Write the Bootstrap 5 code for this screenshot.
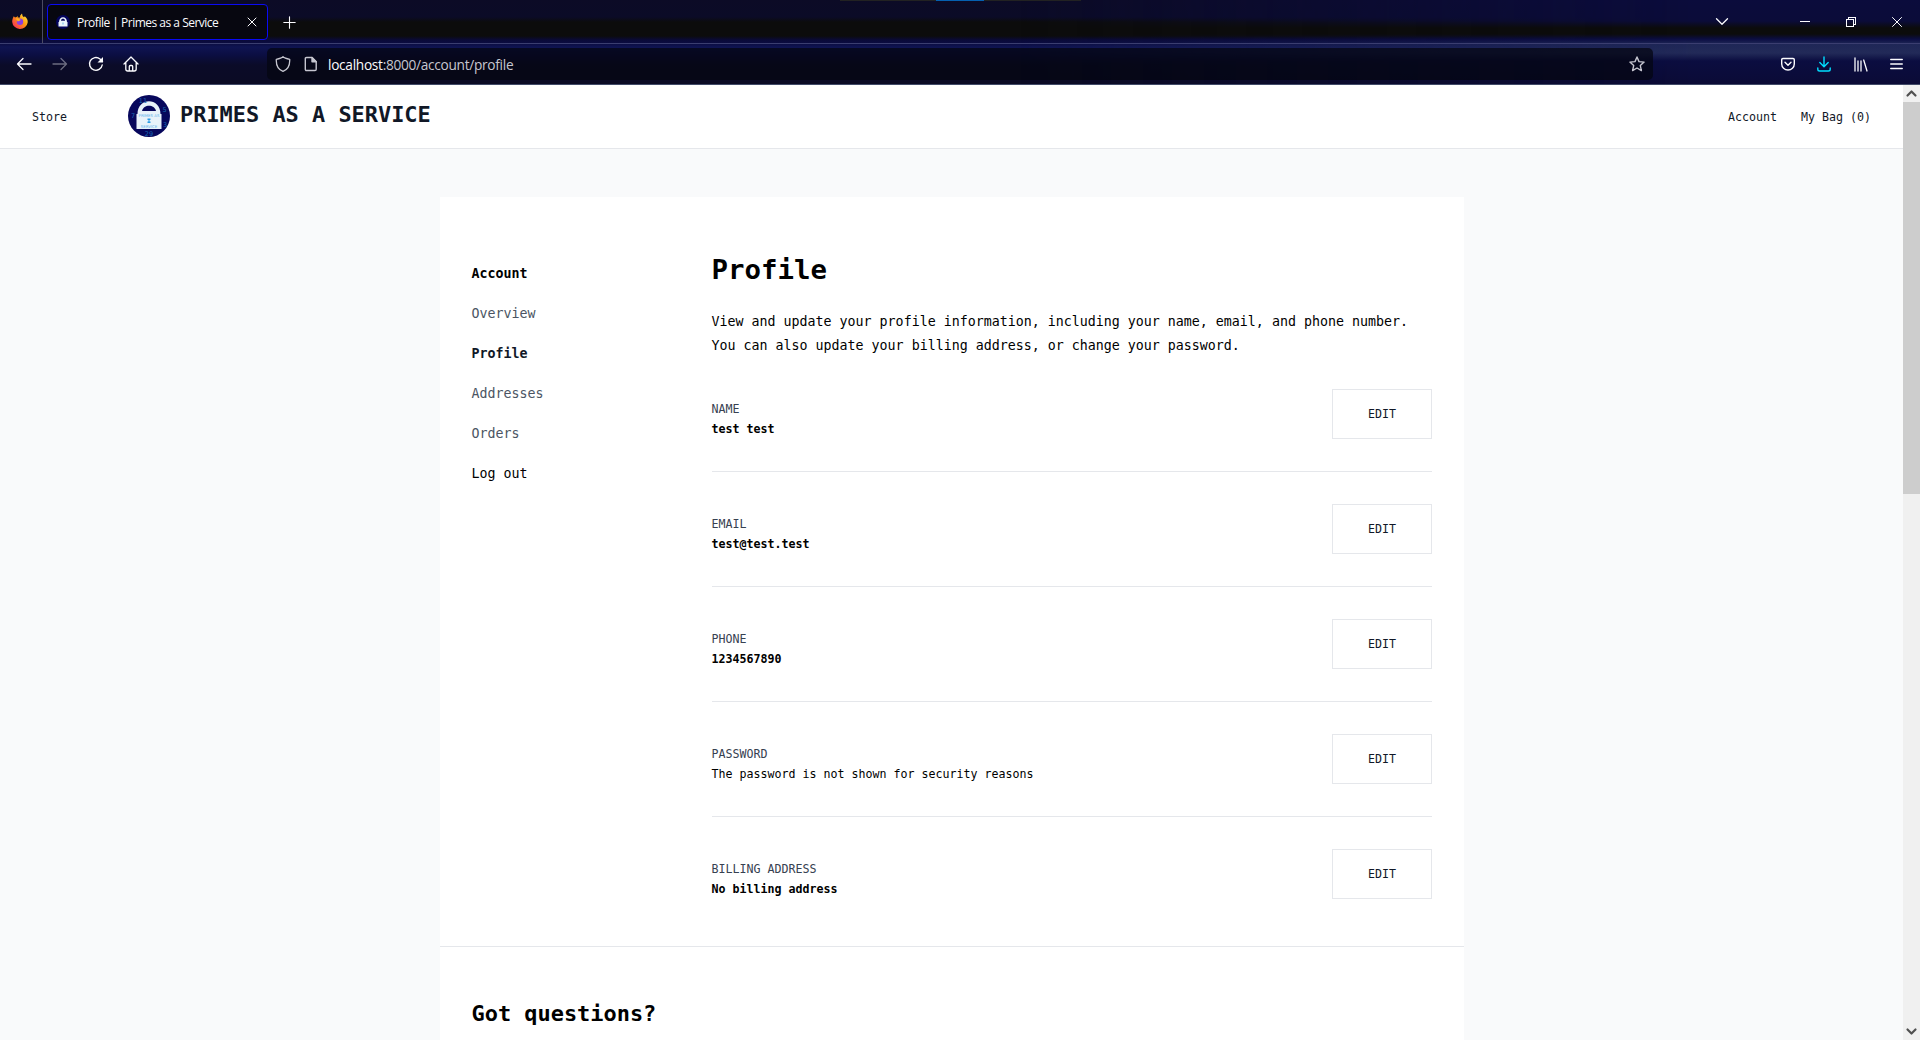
<!DOCTYPE html>
<html lang="en">
<head>
<meta charset="utf-8">
<title>Profile | Primes as a Service</title>
<link href="https://cdn.jsdelivr.net/npm/bootstrap@5.3.0/dist/css/bootstrap.min.css" rel="stylesheet">
<style>
html, body { height: 1040px; overflow: hidden; }
body { font-family: "DejaVu Sans Mono", monospace; font-size: 13.3px; line-height: 24px; color: #000; background: #f9fafb; }
a { color: inherit; text-decoration: none; }
svg { display: block; flex: none; fill: none; stroke: currentColor; stroke-linecap: round; stroke-linejoin: round; }
svg.solid { stroke: none; }
.browser { height: 85px; color: #fbfbfe; font-family: "Open Sans", sans-serif; border-bottom: 1px solid #414a68; background: linear-gradient(#0c0b26 0, #0b0b27 17px, #0c0c0c 22px, #0c0c0c 36px, #0a0a38 40px, #0b0c40 43px, #0f1452 47px, #0b0e42 55px, #0b0b28 65px, #0b0b24 84px); }
.browser::after { content: ""; position: absolute; inset: 0 0 auto auto; width: 900px; height: 84px; z-index: 0; background: linear-gradient(#0b0c3c 0, #0b0c39 21px, #0c0c0c 28px, #0c0c0c 34px, #0b0d42 39px, #1f2757 44px, #222a58 53px, #0b0d40 61px, #0b0b36 84px); -webkit-mask-image: linear-gradient(90deg, transparent, #000 75%); mask-image: linear-gradient(90deg, transparent, #000 75%); }
.browser > div { position: relative; z-index: 1; }
.tabstrip { height: 44px; border-bottom: 1px solid #3b3e70; }
.fox { width: 43px; border-right: 1px solid #4b4b63; padding-left: 12px; }
.tab { width: 221px; height: 36px; margin: 4px 0 0 4px; padding: 0 10px 0 8px; border: 1px solid #0a0af5; border-radius: 4px; background: #070710; font-size: 12px; letter-spacing: -.5px; }
.tab span { margin-left: 3px; padding-top: 1px; }
.toolbar { height: 40px; }
.urlbar { width: 1386px; height: 32px; border-radius: 5px; background: rgba(4,5,16,.72); font-size: 13.7px; color: #c6c6d0; letter-spacing: -.3px; }
.urlbar b { font-weight: 400; color: #fbfbfe; }
.urlbar span { margin-left: 10px; padding-top: 2px; }
.window-marker { top: 0; left: 840px; width: 241px; height: 1px; background: linear-gradient(90deg, #222 96px, #0560b0 96px 144px, #222 144px); z-index: 2; }
.page { height: 955px; }
.site-header { height: 64px; background: #fff; border-bottom: 1px solid #e5e7eb; font-size: 11.63px; color: #111827; padding: 0 32px; }
.logo-link { margin-left: 61px; padding-bottom: 1px; }
.brandname { font-size: 21.93px; font-weight: 700; margin-left: 10px; padding-bottom: 3px; }
.panel { width: 1024px; margin-top: 48px; padding: 0 32px; background: #fff; }
.upper { height: 750px; margin: 0 -32px; padding: 48px 32px 0; border-bottom: 1px solid #e5e7eb; }
.sidebar { width: 240px; padding-top: 17px; color: #4b5563; }
.sidebar a { height: 24px; }
.sidebar .on { color: #111827; font-weight: 700; }
h1 { font-size: 27.4px; line-height: 36px; font-weight: 700; margin: 7px 0 22px; }
h2 { font-size: 21.93px; line-height: 32px; font-weight: 700; margin-top: 51px; }
.entry { height: 115px; padding-top: 32px; font-size: 11.63px; line-height: 20px; }
.entry:first-child { height: 113px; padding-top: 31px; }
.entry + .entry { border-top: 1px solid #e5e7eb; }
.entry > div { padding-top: 10px; }
.entry dt { font-weight: 400; color: #374151; }
.entry dd { margin: 0; font-weight: 700; }
.edit { width: 100px; height: 50px; border: 1px solid #e5e7eb; border-radius: 0; font-size: 11.63px; color: #111827; padding: 2px 0 0 1px; }
.scroller { width: 17px; background: #f0f0f0; color: #505050; }
.thumb { height: 392px; background: #cdcdcd; }
</style>
</head>
<body>
<header class="browser position-relative">
  <div class="window-marker position-absolute"></div>
  <div class="tabstrip d-flex">
    <div class="fox d-flex align-items-center">
      <svg class="solid" width="16" height="17" viewBox="0 0 16 17"><defs><linearGradient id="fx" x1="1" y1="0" x2="0" y2="1"><stop offset="0" stop-color="#fff44f"/><stop offset=".45" stop-color="#ff980e"/><stop offset="1" stop-color="#f5156c"/></linearGradient></defs><path fill="url(#fx)" d="M1.8 3.2 3 4.400 4.700 4 5.500 2.800 5.800 4.600 8 4.500 8.200 2.500 10 .5 10.600 3 12 4.200 12.800 3.200C15 5 16 7 15.700 9.500A7.800 7.500 0 0 1 .2 9C.1 7 .8 4.800 1.800 3.200Z"/><circle cx="8" cy="8.700" r="3.200" fill="#8b3fe0"/><path fill="#ffb020" d="M4 5.500c2-.8 3 .4 4.800 1.400C7.800 8 6.300 7.600 5.800 8.600 5.400 7.400 4.300 7 4 5.500Z"/></svg>
    </div>
    <div class="tab d-flex align-items-center">
      <svg class="solid me-1" width="14" height="14" viewBox="0 0 14 14"><circle cx="7" cy="7" r="7" fill="#04045c"/><path fill="#e9f3fa" d="M2.500 7H3C3 .5 11 .5 11 7H11.500V11.500H2.500Z"/><path fill="#04045c" d="M5 5.700C5 3.200 9 3.200 9 5.700Z"/><path fill="#6bb8ea" d="M6.500 7.500h1v2h-1z"/></svg>
      <span class="text-nowrap">Profile | Primes as a Service</span>
      <svg class="ms-auto" width="10" height="10" viewBox="0 0 10 10" stroke-width="1"><path d="m1 1 8 8M9 1 1 9"/></svg>
    </div>
    <svg style="margin:16px 0 0 15px" width="13" height="13" viewBox="0 0 13 13" stroke-width="1.1"><path d="M6.5.8v11.400M.8 6.500h11.400"/></svg>
    <div class="ms-auto d-flex" style="padding:14px 18px 0 0">
      <svg style="margin:3px 71px 0 0" width="14" height="10" viewBox="0 0 14 10" stroke-width="1.3"><path d="m1.500 1.800 5.500 5.500 5.500-5.500"/></svg>
      <svg style="margin-right:36px" width="10" height="14" viewBox="0 0 10 14"><path d="M0 7.500h10"/></svg>
      <svg style="margin:2px 36px 0 0" width="10" height="11" viewBox="0 0 10 11" shape-rendering="crispEdges"><path d="M.5 3.500h7v7h-7zM2.500 3.500v-2h7v7h-2"/></svg>
      <svg style="margin-top:3px" width="10" height="10" viewBox="0 0 10 10"><path d="m.5.5 9 9M9.500.5l-9 9"/></svg>
    </div>
  </div>
  <div class="toolbar d-flex align-items-center">
    <svg style="margin-left:16px" width="16" height="16" viewBox="0 0 16 16" stroke-width="1.3"><path d="M15 8H1.500M7 2.500 1.500 8 7 13.500"/></svg>
    <svg style="margin-left:20px" opacity=".4" width="16" height="16" viewBox="0 0 16 16" stroke-width="1.3"><path d="M1 8h13.500M9 2.500 14.500 8 9 13.500"/></svg>
    <svg style="margin-left:20px" width="16" height="16" viewBox="0 0 16 16" stroke-width="1.4"><path d="M14.200 9A6.400 6.400 0 1 1 12 3l2.500 2.200"/><path fill="currentColor" stroke="none" d="M15 1v5.500H9.500Z"/></svg>
    <svg style="margin-left:19px" width="16" height="16" viewBox="0 0 16 16" stroke-width="1.3"><path d="m1 8 7-7 7 7M2.800 6.500V13q0 2 2 2h6.400q2 0 2-2V6.500M6.300 15v-4.500q0-1 1-1h1.400q1 0 1 1V15"/></svg>
    <div class="urlbar d-flex align-items-center" style="margin-left:128px">
      <svg style="margin-left:8px" width="16" height="16" viewBox="0 0 16 16" stroke-width="1.3"><path d="M8 .8C6.500 2.300 3.500 2.900 1.300 3.300 1 9 3.300 13.600 8 15.400 12.700 13.600 15 9 14.700 3.300 12.500 2.900 9.500 2.300 8 .8Z"/></svg>
      <svg style="margin-left:13px" width="14" height="16" viewBox="0 0 14 16" stroke-width="1.4"><path d="M2.500 1.500H8L12.200 5.700V13.300q0 1.200-1.200 1.200H2.500q-1.200 0-1.200-1.200V2.700q0-1.200 1.200-1.200Z"/><path fill="currentColor" d="M8 1.500V5.700H12.200Z"/></svg>
      <span><b>localhost</b>:8000/account/profile</span>
      <svg class="ms-auto" style="margin-right:8px" width="16" height="16" viewBox="0 0 16 16" stroke-width="1.4"><path d="m8 1 2 4.600 5.100.5-3.800 3.500 1.100 5L8 12l-4.400 2.600 1.100-5L.9 6.100 6 5.600Z"/></svg>
    </div>
    <svg style="margin-left:128px" width="14" height="14" viewBox="0 0 14 14" stroke-width="1.4"><path d="M2 1.500h10q1.300 0 1.300 1.300V7A6.300 6 0 0 1 .7 7V2.800Q.7 1.500 2 1.500ZM4 5.200l3 3 3-3"/></svg>
    <svg style="margin-left:22px;color:#00ddff" width="14" height="16" viewBox="0 0 14 16" stroke-width="1.4"><path d="M7 1v9.500M2.800 6.500 7 10.700l4.200-4.200M.8 12v1.200Q.8 15 2.600 15h8.800q1.800 0 1.800-1.800V12"/></svg>
    <svg style="margin-left:23px" width="14" height="15" viewBox="0 0 14 15" stroke-width="1.3"><path d="M1 1v13M4 4v10M7 4v10M9.700 3l3.300 11"/></svg>
    <svg style="margin-left:22px" width="13" height="12" viewBox="0 0 13 12" stroke-width="1.3"><path d="M.7 1.500h11.600M.7 6h11.600M.7 10.500h11.600"/></svg>
  </div>
</header>

<div class="page d-flex">
  <div class="flex-grow-1 d-flex flex-column align-items-center">
    <nav class="site-header w-100 d-flex align-items-center">
      <a href="#">Store</a>
      <a href="#" class="logo-link d-flex align-items-center">
        <svg class="solid" width="42" height="42" viewBox="0 0 42 42"><circle cx="21" cy="21" r="21" fill="#07075c"/><path fill="#e8f2fa" d="M8.500 34V19H9.500C9.500 2 32.500 2 32.500 19H33.500V34Z"/><path fill="#07075c" d="M14 16C15.500 9 26.500 9 28 16Z"/><g fill="#1769b4" font-size="6.500" text-anchor="middle" font-family="DejaVu Sans"><text x="15" y="7.500">11</text><text x="5" y="23">7</text><text x="36.500" y="17">5</text><text x="37" y="32">3</text><text x="21" y="41">29</text></g><g fill="#62b4ea" font-size="3.900" text-anchor="middle" font-family="DejaVu Sans"><text x="21" y="22">PRIMES AS</text><text x="21" y="32.500">SERVICE</text></g><path fill="#299be5" d="M19.500 23.500h3v1.500h-1v1.500h1V28h-3v-1.500h1V25h-1z"/></svg>
        <span class="brandname text-nowrap">PRIMES AS A SERVICE</span>
      </a>
      <a href="#" class="ms-auto">Account</a>
      <a href="#" style="margin-left:24px">My Bag (0)</a>
    </nav>
    <main class="panel flex-grow-1">
      <div class="upper d-flex">
        <aside class="sidebar d-flex flex-column gap-3">
          <a class="fw-bold text-black">Account</a>
          <a href="#">Overview</a>
          <a href="#" class="on">Profile</a>
          <a href="#">Addresses</a>
          <a href="#">Orders</a>
          <a href="#" class="text-black">Log out</a>
        </aside>
        <section class="flex-grow-1">
          <h1>Profile</h1>
          <p class="mb-0 text-nowrap">View and update your profile information, including your name, email, and phone number.<br>You can also update your billing address, or change your password.</p>
          <dl class="mb-0">
            <div class="entry d-flex justify-content-between"><div><dt>NAME</dt><dd>test test</dd></div><button class="btn edit">EDIT</button></div>
            <div class="entry d-flex justify-content-between"><div><dt>EMAIL</dt><dd>test@test.test</dd></div><button class="btn edit">EDIT</button></div>
            <div class="entry d-flex justify-content-between"><div><dt>PHONE</dt><dd>1234567890</dd></div><button class="btn edit">EDIT</button></div>
            <div class="entry d-flex justify-content-between"><div><dt>PASSWORD</dt><dd class="fw-normal">The password is not shown for security reasons</dd></div><button class="btn edit">EDIT</button></div>
            <div class="entry d-flex justify-content-between"><div><dt>BILLING ADDRESS</dt><dd>No billing address</dd></div><button class="btn edit">EDIT</button></div>
          </dl>
        </section>
      </div>
      <h2 class="mb-0">Got questions?</h2>
    </main>
  </div>
  <div class="scroller d-flex flex-column">
    <svg width="17" height="17" viewBox="0 0 17 17" stroke-width="2.2"><path d="m4.500 10.500 4-4 4 4"/></svg>
    <div class="thumb"></div>
    <svg class="mt-auto" width="17" height="17" viewBox="0 0 17 17" stroke-width="2.200"><path d="m4.500 6.500 4 4 4-4"/></svg>
  </div>
</div>
<script src="https://cdn.jsdelivr.net/npm/bootstrap@5.3.0/dist/js/bootstrap.bundle.min.js"></script>
</body>
</html>
